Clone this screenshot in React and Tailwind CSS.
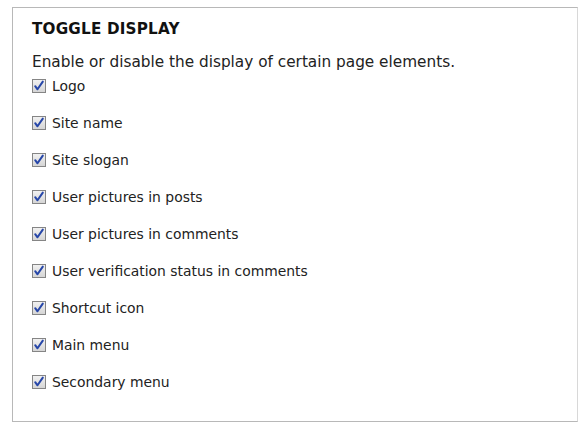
const ITEMS = [
  'Logo',
  'Site name',
  'Site slogan',
  'User pictures in posts',
  'User pictures in comments',
  'User verification status in comments',
  'Shortcut icon',
  'Main menu',
  'Secondary menu',
]

function CheckBox() {
  return (
    <svg width="14" height="14" viewBox="0 0 14 14" className="shrink-0">
      <defs>
        <linearGradient id="cbg" x1="0" y1="0" x2="0" y2="1">
          <stop offset="0" stopColor="#f2f2f2" />
          <stop offset="1" stopColor="#d4d4d4" />
        </linearGradient>
      </defs>
      <rect x="0.5" y="0.5" width="13" height="13" fill="url(#cbg)" stroke="#858585" />
      <path d="M3.2 7.2l2.3 3.1L10.8 2.6" fill="none" stroke="#2646a8" strokeWidth="2" strokeLinecap="round" strokeLinejoin="round" />
    </svg>
  )
}

export default function App() {
  return (
    <div className="w-[580px] h-[434px] bg-white pt-[7px] pl-[12px] font-['DejaVu_Sans',sans-serif] text-[#222]">
      <div className="w-[566px] h-[415px] border border-[#b8b8b8] border-r-[#d8d8d8] px-[19px] pt-[12px]">
        <h2 className="text-[15.2px] font-bold tracking-[0.2px] text-[#111] leading-[18px]">TOGGLE DISPLAY</h2>
        <p className="mt-[15px] text-[15.3px] leading-[18px]">
          Enable or disable the display of certain page elements.
        </p>
        <div className="flex flex-col gap-[19px] mt-[6px]">
          {ITEMS.map(label => (
            <label key={label} className="flex items-center gap-[6px] h-[18px] text-[13.9px]">
              <CheckBox />
              <span>{label}</span>
            </label>
          ))}
        </div>
      </div>
    </div>
  )
}
